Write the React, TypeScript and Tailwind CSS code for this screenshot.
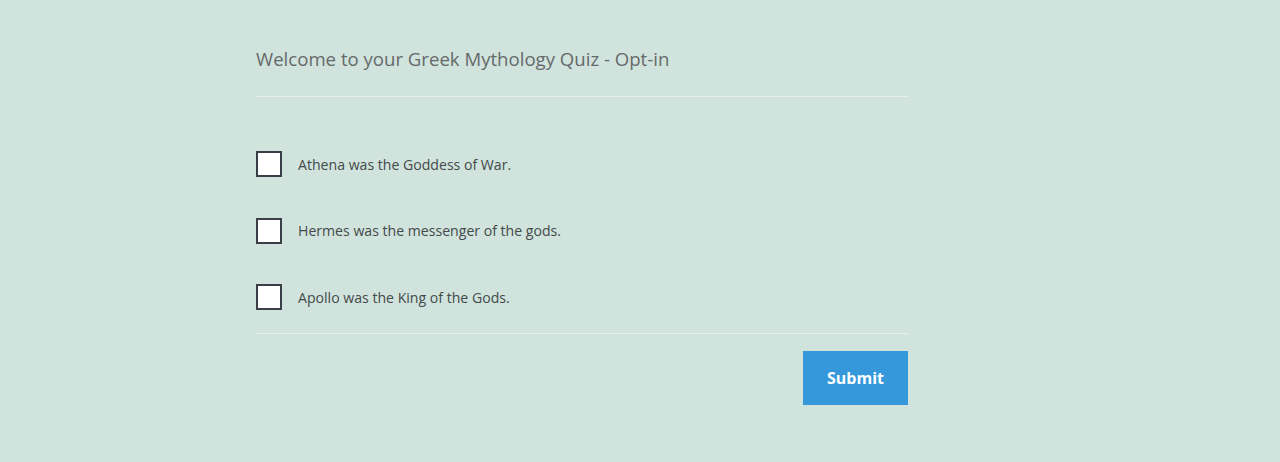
import React from "react";

const items = [
  "Athena was the Goddess of War.",
  "Hermes was the messenger of the gods.",
  "Apollo was the King of the Gods.",
];

export default function App() {
  return (
    <div className="min-h-[462px] w-full bg-[#d0e3dd]" style={{ fontFamily: '"Open Sans", "Noto Sans", sans-serif' }}>
      <div className="ml-[256px] w-[652px] pt-[44px]">
        <h1 className="text-[18.6px] leading-[30px] text-[#666a6a] font-normal">Welcome to your Greek Mythology Quiz - Opt-in</h1>
        <div className="mt-[22px] h-px bg-[#e6efec]" />
        <div className="pt-[34px] pb-[2px] flex flex-col">
          {items.map((t) => (
            <label key={t} className="flex items-center h-[66.5px]">
              <span className="w-[26px] h-[26px] border-2 border-[#3a3f47] bg-white shrink-0" />
              <span className="ml-[16px] text-[14.1px] text-[#444a4a]">{t}</span>
            </label>
          ))}
        </div>
        <div className="h-px bg-[#e6efec]" />
        <div className="flex justify-end mt-[17px]">
          <button className="w-[105px] h-[54px] bg-[#3498db] text-white font-bold text-[16px]">Submit</button>
        </div>
      </div>
    </div>
  );
}
